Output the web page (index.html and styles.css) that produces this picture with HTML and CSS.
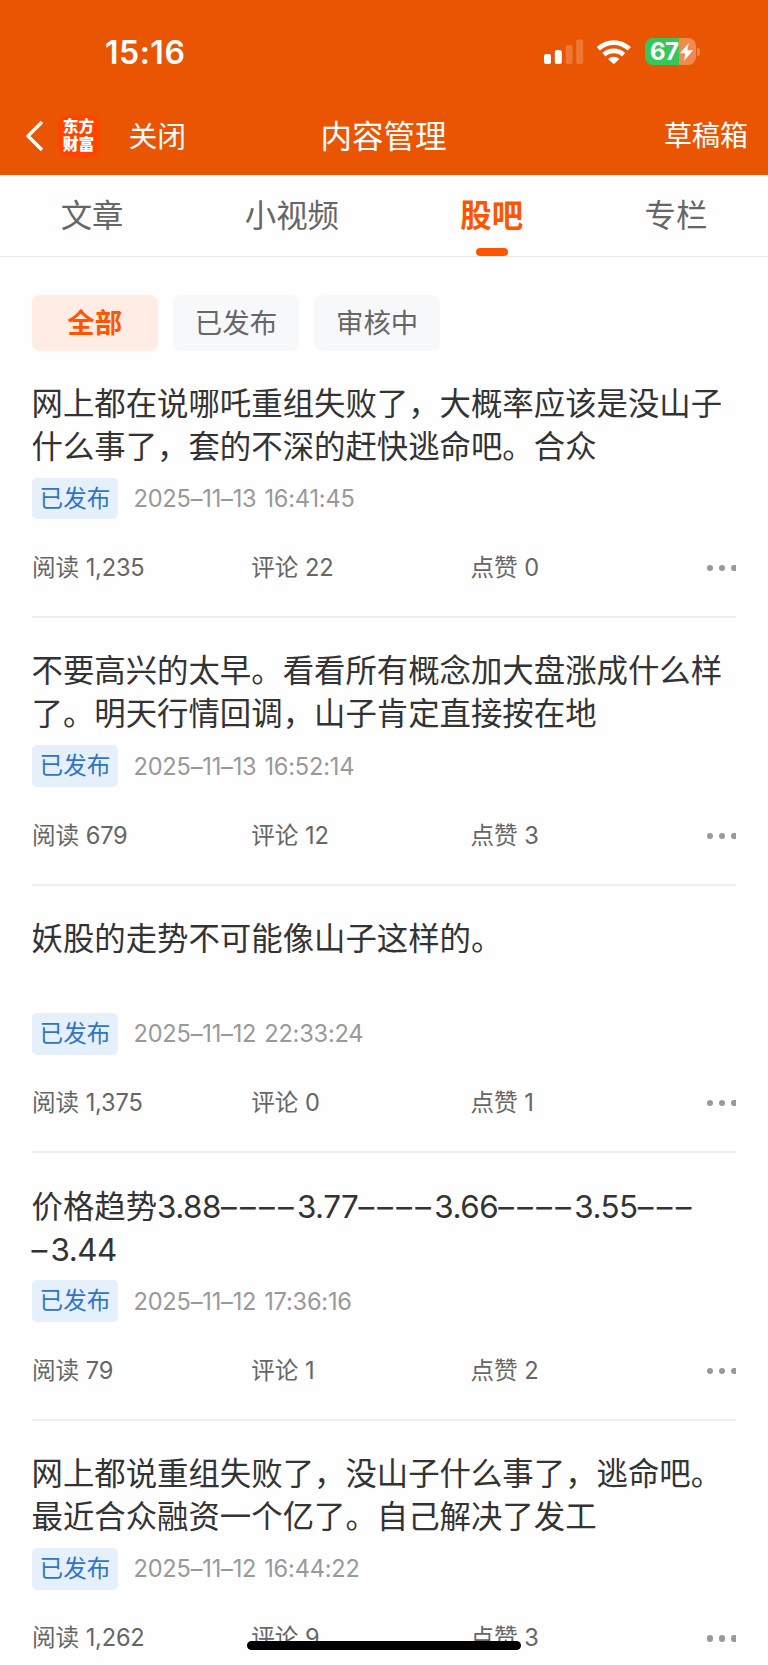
FILE: index.html
```
<!DOCTYPE html>
<html lang="zh-CN">
  <head>
    <meta charset="UTF-8" />
    <meta name="viewport" content="width=device-width, initial-scale=1.0" />
    <title>内容管理</title>
    <link rel="stylesheet" href="styles.css">
  </head>
  <body>
    <header class="header">
      <div class="status-bar">
        <span class="time">15:16</span>
        <div class="status-icons">
          <svg class="signal" width="40" height="26" viewBox="0 0 40 26">
            <rect x="0" y="15" width="7" height="10" rx="2" fill="#fff" />
            <rect x="10.8" y="11" width="7" height="14" rx="2" fill="#fff" />
            <rect x="21.6" y="6" width="7" height="19" rx="2" fill="#fff" opacity="0.2" />
            <rect x="32.2" y="0.5" width="7" height="24.5" rx="2" fill="#fff" opacity="0.2" />
          </svg>
          <svg class="wifi" width="36" height="26" viewBox="0 0 36 26">
            <path d="M0.6 8.1a24.8 24.8 0 0 1 34.3 0l-3.3 3.5a20 20 0 0 0-27.7 0z" fill="#fff" />
            <path d="M6.3 14a16.6 16.6 0 0 1 22.9 0l-3.3 3.4a12 12 0 0 0-16.3 0z" fill="#fff" />
            <path d="M12.1 19.9a8.4 8.4 0 0 1 11.3 0l-5.65 5.4z" fill="#fff" />
          </svg>
          <div class="battery">
            <span class="level">67</span>
            <svg width="13" height="18" viewBox="0 0 13 18">
              <path d="M8.8 0L0 10.3h5.4L3.8 18 13 7.3H7.3z" fill="#fff" />
            </svg>
          </div>
          <span class="battery-cap"></span>
        </div>
      </div>
      <nav class="nav">
        <div class="nav-left">
          <svg width="18" height="32" viewBox="0 0 18 32">
            <path d="M16 2L2 16l14 14" fill="none" stroke="#fff" stroke-width="3.4" stroke-linejoin="round" />
          </svg>
          <div class="logo">东方<br />财富</div>
          <span class="close">关闭</span>
        </div>
        <h1>内容管理</h1>
        <span class="nav-right">草稿箱</span>
      </nav>
    </header>

    <div class="tabs">
      <span>文章</span>
      <span>小视频</span>
      <span class="active">股吧</span>
      <span>专栏</span>
    </div>

    <main class="content">
      <div class="filters">
        <span class="active">全部</span>
        <span>已发布</span>
        <span>审核中</span>
      </div>

      <article class="post">
        <h2>网上都在说哪吒重组失败了，大概率应该是没山子<br />什么事了，套的不深的赶快逃命吧。合众</h2>
        <div class="meta"><span class="tag">已发布</span><time>2025–11–13 16:41:45</time></div>
        <div class="stats">
          <span>阅读 1,235</span><span>评论 22</span><span>点赞 0</span>
          <div class="more"><i></i><i></i><i></i></div>
        </div>
      </article>

      <article class="post">
        <h2>不要高兴的太早。看看所有概念加大盘涨成什么样<br />了。明天行情回调，山子肯定直接按在地</h2>
        <div class="meta"><span class="tag">已发布</span><time>2025–11–13 16:52:14</time></div>
        <div class="stats">
          <span>阅读 679</span><span>评论 12</span><span>点赞 3</span>
          <div class="more"><i></i><i></i><i></i></div>
        </div>
      </article>

      <article class="post">
        <h2>妖股的走势不可能像山子这样的。</h2>
        <div class="meta"><span class="tag">已发布</span><time>2025–11–12 22:33:24</time></div>
        <div class="stats">
          <span>阅读 1,375</span><span>评论 0</span><span>点赞 1</span>
          <div class="more"><i></i><i></i><i></i></div>
        </div>
      </article>

      <article class="post">
        <h2>价格趋势<span class="price">3.88<b>––––</b>3.77<b>––––</b>3.66<b>––––</b>3.55<b>–––</b><br /><b>–</b>3.44</span></h2>
        <div class="meta"><span class="tag">已发布</span><time>2025–11–12 17:36:16</time></div>
        <div class="stats">
          <span>阅读 79</span><span>评论 1</span><span>点赞 2</span>
          <div class="more"><i></i><i></i><i></i></div>
        </div>
      </article>

      <article class="post">
        <h2>网上都说重组失败了，没山子什么事了，逃命吧。<br />最近合众融资一个亿了。自己解决了发工</h2>
        <div class="meta"><span class="tag">已发布</span><time>2025–11–12 16:44:22</time></div>
        <div class="stats">
          <span>阅读 1,262</span><span>评论 9</span><span>点赞 3</span>
          <div class="more"><i></i><i></i><i></i></div>
        </div>
      </article>
    </main>

    <div class="home-indicator"></div>
  </body>
</html>
```

FILE: styles.css
```
* {
  box-sizing: border-box;
}
body {
  margin: 0;
  height: 1665px;
  overflow: hidden;
  background: #fefefe;
  color: #333;
  font-family: Inter, "Noto Sans CJK SC", sans-serif;
}
h1,
h2 {
  margin: 0;
  font-weight: 400;
}

/* header */
.header {
  height: 174.5px;
  background: #ea5504;
  color: #fff;
}
.status-bar {
  display: flex;
  justify-content: space-between;
  align-items: center;
  height: 105px;
  padding: 0 68px 0 105px;
}
.time {
  font-size: 32px;
  font-weight: 600;
  letter-spacing: 0.5px;
}
.status-icons {
  display: flex;
  align-items: center;
  padding-bottom: 2px;
}
.wifi {
  margin: 0 13px 0 12px;
}
.battery {
  display: flex;
  align-items: center;
  width: 51px;
  height: 27px;
  padding-left: 5px;
  border-radius: 8px;
  background: linear-gradient(to right, #34c759 34px, #f28a50 34px);
}
.level {
  width: 30px;
  font-size: 24px;
  font-weight: 700;
  line-height: 29px;
  letter-spacing: -0.5px;
}
.battery-cap {
  width: 3px;
  height: 8px;
  margin-left: 1px;
  border-radius: 0 4px 4px 0;
  background: #f28a50;
}
.nav {
  display: grid;
  grid-template-columns: 1fr auto 1fr;
  align-items: center;
  height: 62px;
  padding: 0 20px 0 26px;
  font-size: 28px;
}
.nav h1 {
  padding: 0 7px 4px 0;
  font-size: 31.5px;
}
.nav-left {
  display: flex;
  align-items: center;
}
.close {
  padding-bottom: 4px;
  font-size: 28.8px;
}
.nav-right {
  padding-bottom: 4px;
  text-align: right;
}
.logo {
  width: 42px;
  height: 42px;
  margin: 0 29px 0 13.5px;
  padding-top: 3px;
  border-radius: 9px;
  background: #ff4400;
  font-size: 15.7px;
  font-weight: 900;
  line-height: 18px;
  text-align: center;
}

/* tabs */
.tabs {
  display: flex;
  justify-content: space-around;
  height: 82.5px;
  border-bottom: 1.5px solid #e9e9e9;
  color: #666;
  font-size: 31.4px;
  line-height: 82px;
}
.tabs .active {
  position: relative;
  color: #ff5500;
  font-weight: 700;
}
.tabs .active::after {
  content: "";
  position: absolute;
  bottom: 0;
  left: 50%;
  width: 32px;
  height: 8px;
  margin-left: -16px;
  border-radius: 4px;
  background: #ff5500;
}

/* list */
.content {
  padding: 38px 32px 0;
}
.filters {
  display: flex;
  gap: 15.7px;
}
.filters span {
  width: 125.5px;
  height: 55.5px;
  border-radius: 8px;
  background: #f7f8fa;
  color: #666;
  font-size: 27.4px;
  line-height: 57px;
  text-align: center;
}
.filters .active {
  background: #ffece5;
  color: #ff5500;
  font-weight: 700;
}
.post {
  height: 267.6px;
  padding-top: 32.3px;
  border-bottom: 2px solid #eee;
}
.post h2 {
  height: 86px;
  margin-left: -0.5px;
  font-size: 31.4px;
  line-height: 43px;
  white-space: nowrap;
}
.price {
  letter-spacing: -0.5px;
}
.price b {
  font-weight: 400;
  letter-spacing: 3.3px;
}
.meta {
  display: flex;
  align-items: center;
  gap: 15.5px;
  margin-top: 8.9px;
}
.tag {
  width: 86px;
  height: 41.7px;
  border-radius: 5px;
  background: #e6f0fb;
  color: #2f74c9;
  font-size: 23.6px;
  line-height: 41.5px;
  text-align: center;
}
.meta time {
  color: #999;
  font-size: 23.6px;
  letter-spacing: -0.2px;
  word-spacing: 1.5px;
}
.stats {
  display: grid;
  grid-template-columns: 219.3px 219.3px 1fr 30px;
  align-items: center;
  height: 34px;
  margin-top: 31.7px;
  color: #666;
  font-size: 23.6px;
  line-height: 34px;
  letter-spacing: -0.2px;
  word-spacing: 0.5px;
}
.more {
  display: flex;
  gap: 6px;
  padding-left: 1px;
  overflow: hidden;
}
.more i {
  flex: none;
  width: 6.2px;
  height: 6.2px;
  border-radius: 50%;
  background: #999;
}

.home-indicator {
  position: fixed;
  bottom: 15px;
  left: 247px;
  width: 274px;
  height: 9px;
  border-radius: 5px;
  background: #000;
}
```
